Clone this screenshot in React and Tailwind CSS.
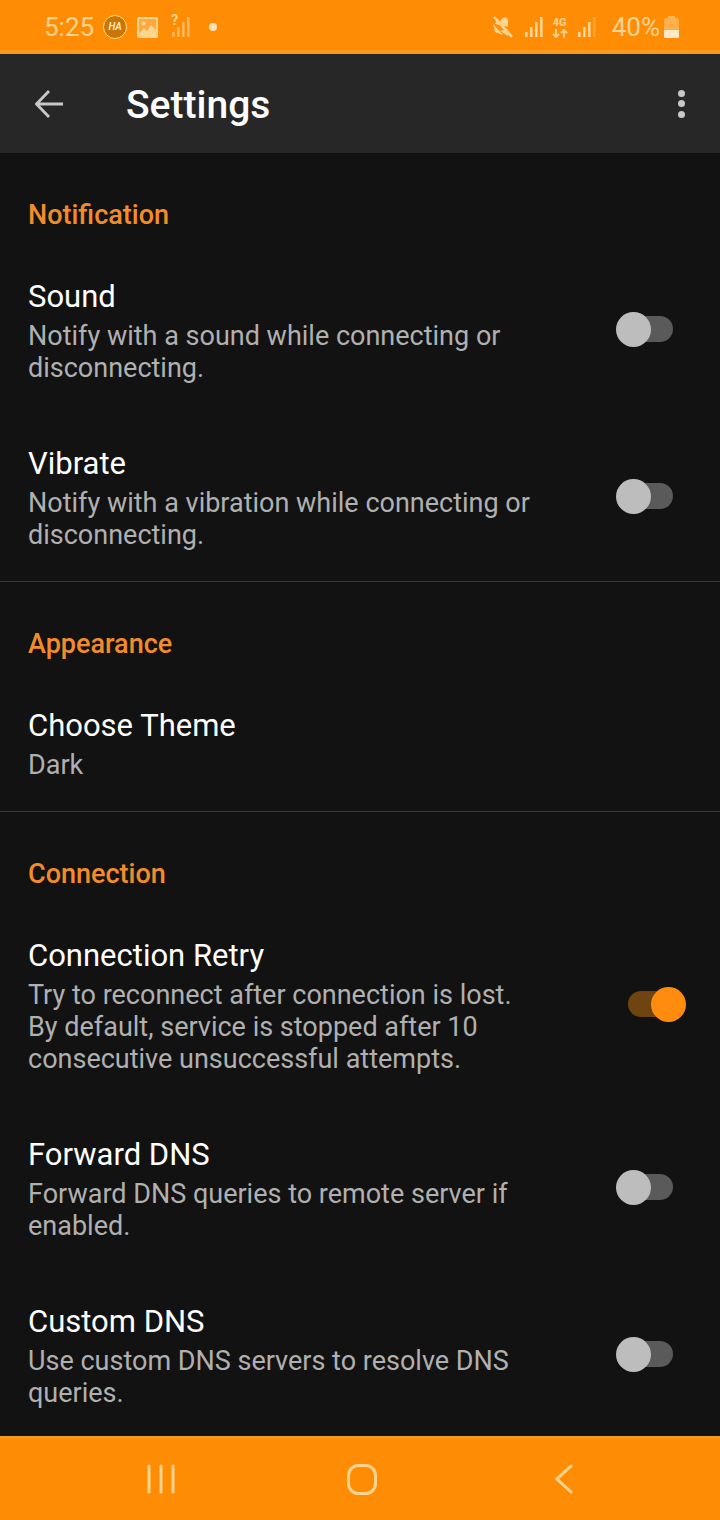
import React from 'react';

const sections = [
  {
    title: 'Notification',
    rows: [
      { title: 'Sound', summary: 'Notify with a sound while connecting or disconnecting.', toggle: false },
      { title: 'Vibrate', summary: 'Notify with a vibration while connecting or disconnecting.', toggle: false },
    ],
  },
  {
    title: 'Appearance',
    rows: [{ title: 'Choose Theme', summary: 'Dark' }],
  },
  {
    title: 'Connection',
    rows: [
      {
        title: 'Connection Retry',
        summary: 'Try to reconnect after connection is lost.\nBy default, service is stopped after 10 consecutive unsuccessful attempts.',
        toggle: true,
      },
      { title: 'Forward DNS', summary: 'Forward DNS queries to remote server if enabled.', toggle: false },
      { title: 'Custom DNS', summary: 'Use custom DNS servers to resolve DNS queries.', toggle: false },
    ],
  },
];

const SignalIcon = ({ bars = 4, className = '' }) => (
  <svg viewBox="0 0 20 22" className={`h-[22px] w-[20px] ${className}`} fill="currentColor">
    {[0, 1, 2, 3].map((i) => (
      <rect key={i} x={1 + i * 5} y={16 - i * 5} width="2.6" height={5 + i * 5} opacity={i < bars ? 1 : 0.35} />
    ))}
  </svg>
);

const StatusBar = () => (
  <div className="flex h-[54px] shrink-0 items-center justify-between border-b-4 border-[#f99a1f] bg-[#ff8c05] pl-[44px] pr-[41px] pt-1 text-[#ffd48f]">
    <div className="flex items-center">
      <span className="text-[26px] leading-none">5:25</span>
      <div className="ml-[9px] flex h-[24px] w-[24px] items-center justify-center rounded-full border border-[#ffe27a] bg-[#c9750a] text-[10px] font-bold italic leading-none text-[#ffe2b0]">
        HA
      </div>
      {/* gallery notification */}
      <svg viewBox="0 0 21 21" className="ml-[10px] h-[21px] w-[21px]">
        <rect width="21" height="21" rx="2" fill="currentColor" />
        <rect x="2" y="2" width="17" height="17" fill="#ffa83c" />
        <circle cx="6.5" cy="6.5" r="2" fill="currentColor" />
        <path d="M2 17 L7 11 L10 14 L14 8 L19 13 V19 H2 Z" fill="currentColor" />
      </svg>
      <div className="relative ml-[13px] h-[22px] w-[20px]">
        <SignalIcon bars={4} className="opacity-60" />
        <span className="absolute left-0 top-[-3px] text-[14px] font-bold leading-none">?</span>
      </div>
      <div className="ml-[18px] h-[8px] w-[8px] rounded-full bg-[#ffe2b8]" />
    </div>
    <div className="flex items-center">
      {/* muted speaker */}
      <svg viewBox="0 0 20 22" className="h-[22px] w-[20px]" fill="currentColor">
        <path d="M2 8 Q2 6 4 6 H6 L10 2 Q14 0 15 4 V11 Z" />
        <path d="M1 1 L19 21" stroke="currentColor" strokeWidth="2.6" />
        <path d="M0 8 L10 19 L2 16 Z M7 15 L15 20 V13 Z" />
      </svg>
      <SignalIcon bars={4} className="ml-[11px]" />
      <div className="ml-[8px] flex w-[16px] flex-col items-center">
        <span className="text-[11px] font-bold leading-[12px]">4G</span>
        <svg viewBox="0 0 16 9" className="h-[9px] w-[16px]" fill="none" stroke="currentColor" strokeWidth="1.8">
          <path d="M4 0 V8 M1 5 L4 8 L7 5 M12 9 V1 M9 4 L12 1 L15 4" />
        </svg>
      </div>
      <SignalIcon bars={3} className="ml-[9px]" />
      <span className="ml-[15px] text-[26px] leading-none">40%</span>
      <svg viewBox="0 0 15 22" className="ml-[4px] h-[22px] w-[15px]" fill="currentColor">
        <rect x="4" y="0" width="7" height="2" opacity="0.6" />
        <rect x="0" y="2" width="15" height="20" rx="1.5" opacity="0.5" />
        <path d="M0 14 H15 V20.5 A1.5 1.5 0 0 1 13.5 22 H1.5 A1.5 1.5 0 0 1 0 20.5 Z" fill="#ffe9c9" />
      </svg>
    </div>
  </div>
);

const AppBar = () => (
  <div className="flex h-[99px] shrink-0 items-center bg-[#272727] pl-[35px] pr-[35px]">
    <svg viewBox="0 0 28 28" className="h-[28px] w-[28px]" fill="none" stroke="#c8c8c8" strokeWidth="2.8">
      <path d="M28 14 H2 M14 1 L1.5 14 L14 27" />
    </svg>
    <h1 className="ml-[63px] flex-1 pt-[3px] text-[39px] font-medium leading-none text-white">Settings</h1>
    <div className="flex flex-col gap-[3.5px]">
      <div className="h-[7px] w-[7px] rounded-full bg-[#c8c8c8]" />
      <div className="h-[7px] w-[7px] rounded-full bg-[#c8c8c8]" />
      <div className="h-[7px] w-[7px] rounded-full bg-[#c8c8c8]" />
    </div>
  </div>
);

const Toggle = ({ on }) => (
  <div className={`relative h-[26px] w-[45px] rounded-full ${on ? 'bg-[#6f4410]' : 'bg-[#5a5a5a]'}`}>
    {on ? (
      <div className="absolute right-[-13px] top-[-4.5px] h-[35px] w-[35px] rounded-full bg-[#ff8c0f]" />
    ) : (
      <div className="absolute left-[-12px] top-[-4.5px] h-[35px] w-[35px] rounded-full bg-[#bdbdbd]" />
    )}
  </div>
);

const SettingRow = ({ row }) => (
  <div className="flex items-center pb-[30px] pl-[28px] pr-[47px] pt-[30px]">
    <div className="w-[540px]">
      <div className="text-[31px] leading-[40px] text-white">{row.title}</div>
      <div className="mt-[3px] whitespace-pre-line text-[27px] leading-[32px] text-[#b0b0b0]">{row.summary}</div>
    </div>
    {row.toggle !== undefined && (
      <div className="mb-[3px] ml-auto">
        <Toggle on={row.toggle} />
      </div>
    )}
  </div>
);

const NavBar = () => (
  <div className="flex h-[84px] shrink-0 items-center border-t-2 border-[#f09a2a] bg-[#ff8c05] pl-[147px] text-[#ffd48f]">
    <svg viewBox="0 0 28 30" className="h-[30px] w-[28px]" fill="none" stroke="currentColor" strokeWidth="3" strokeLinecap="round">
      <path d="M2 2 V28 M14 2 V28 M26 2 V28" />
    </svg>
    <svg viewBox="0 0 30 31" className="ml-[172px] h-[31px] w-[30px]" fill="none" stroke="currentColor" strokeWidth="3">
      <rect x="1.5" y="1.5" width="27" height="28" rx="10" />
    </svg>
    <svg viewBox="0 0 18 30" className="ml-[178px] h-[30px] w-[18px]" fill="none" stroke="currentColor" strokeWidth="3" strokeLinecap="round">
      <path d="M16 2 L2 15 L16 28" />
    </svg>
  </div>
);

export default function App() {
  return (
    <div className="flex h-[1520px] w-[720px] flex-col overflow-hidden bg-[#121212] font-['Roboto',sans-serif]">
      <StatusBar />
      <AppBar />
      <div className="min-h-0 flex-1 overflow-hidden">
        {sections.map((section, i) => (
          <div key={section.title} className={i < sections.length - 1 ? 'border-b border-[#3a3a3a]' : ''}>
            <h2 className="pb-[16px] pl-[28px] pt-[46px] text-[27px] font-medium leading-[32px] text-[#f28c28]">
              {section.title}
            </h2>
            {section.rows.map((row) => (
              <SettingRow key={row.title} row={row} />
            ))}
          </div>
        ))}
      </div>
      <NavBar />
    </div>
  );
}
